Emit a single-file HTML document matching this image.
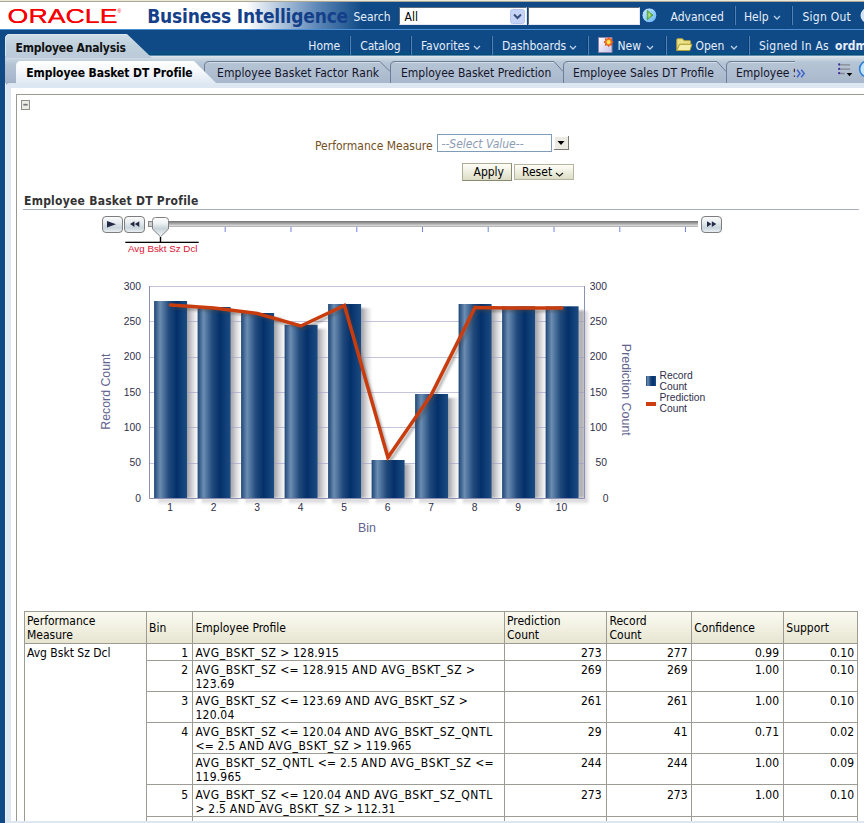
<!DOCTYPE html>
<html><head><meta charset="utf-8"><title>Oracle BI Interactive Dashboards - Employee Analysis</title>
<style>
html,body{margin:0;padding:0;background:#fff;}
body{width:864px;height:823px;overflow:hidden;position:relative;font-family:"DejaVu Sans Condensed","Liberation Sans",sans-serif;font-size:12px;}
.a{position:absolute;}
.t{position:absolute;white-space:nowrap;}
.sep{position:absolute;width:2px;background:linear-gradient(to right,#0c3d72 0,#0c3d72 1px,#4f82b8 1px,#4f82b8 2px);margin-left:-1px;}
.sepd{position:absolute;width:1px;background:#0b3a6c;}
.U{letter-spacing:.62px;}
</style></head><body>

<div class="a" style="left:0;top:0;width:864px;height:1px;background:#ece9d8"></div>
<div class="a" style="left:0;top:1px;width:864px;height:1px;background:#aca899"></div>
<div class="a" style="left:0;top:2px;width:864px;height:27px;background:linear-gradient(to right,#fff 0,#fff 246px,#5c86b6 318px,#104a86 362px,#104a86 864px)"></div>
<div class="a" style="left:0;top:29px;width:864px;height:1px;background:#4d8fd6"></div>
<div class="a" style="left:0;top:30px;width:864px;height:25px;background:#104a86"></div>
<div class="a" style="left:5px;top:51px;width:859px;height:4px;background:linear-gradient(to bottom,#104a86,#0a4f86 1.5px,#07507f 2.5px,#044878 4px)"></div>
<div class="a" style="left:0;top:30px;width:5px;height:793px;background:#104a86"></div>
<svg class="a" style="left:0;top:2px" width="140" height="27" viewBox="0 0 140 27"><g font-family='"Liberation Sans",sans-serif' font-size="19.4" fill="#f80000"><text x="7.6" y="20.6" textLength="110" lengthAdjust="spacingAndGlyphs">ORACLE</text><text x="7.6" y="21.4" textLength="110" lengthAdjust="spacingAndGlyphs">ORACLE</text></g><text x="117.5" y="10.5" font-family='"Liberation Sans",sans-serif' font-size="5" fill="#f80000">®</text></svg>
<div class="t" style="left:147.3px;top:5.73px;font-size:19px;line-height:21px;color:#14408a;font-weight:bold;letter-spacing:-0.2px;">Business Intelligence</div>
<div class="t" style="left:353.5px;top:9.65px;font-size:12px;line-height:14px;color:#e6eefa;">Search</div>
<div class="a" style="left:399px;top:7px;width:126px;height:16px;background:#fff;border:1px solid;border-color:#5a6a80 #e4e8ee #e4e8ee #5a6a80"></div>
<div class="t" style="left:404.5px;top:9.65px;font-size:12px;line-height:14px;color:#000;">All</div>
<svg class="a" style="left:510px;top:8.500px" width="15" height="15" viewBox="0 0 15 15"><rect x="0.5" y="0.5" width="14" height="14" rx="2" fill="#c6d5f7" stroke="#b4c6ee"/><path d="M4 5.5 L7.5 9 L11 5.5" fill="none" stroke="#3a4f7a" stroke-width="2"/></svg>
<div class="a" style="left:528px;top:7px;width:110px;height:16px;background:#fff;border:1px solid;border-color:#5a6a80 #e4e8ee #e4e8ee #5a6a80"></div>
<svg class="a" style="left:641px;top:7px" width="17" height="17" viewBox="0 0 17 17"><defs><linearGradient id="go" x1="0" y1="0" x2="1" y2="1"><stop offset="0" stop-color="#d2ecff"/><stop offset="0.5" stop-color="#93d0fb"/><stop offset="1" stop-color="#62b4f2"/></linearGradient><radialGradient id="gt" cx="0.35" cy="0.5" r="0.6"><stop offset="0" stop-color="#b8e68a"/><stop offset="1" stop-color="#4a9c22"/></radialGradient></defs><circle cx="8.400" cy="8.300" r="7.400" fill="url(#go)" stroke="#0b3c88" stroke-width="0.900"/><path d="M6.300 3.400 L12 8.100 L6.300 12.800 Z" fill="url(#gt)" stroke="#3f8f1e" stroke-width="0.600"/></svg>
<div class="t" style="left:670.5px;top:9.65px;font-size:12px;line-height:14px;color:#e6eefa;">Advanced</div>
<div class="sep" style="left:735px;top:6px;height:19px"></div>
<div class="t" style="left:744px;top:9.65px;font-size:12px;line-height:14px;color:#e6eefa;">Help</div>
<svg class="a" style="left:772.5px;top:15px" width="8" height="6" viewBox="0 0 8 6"><path d="M1 1 L4.0 4 L7 1" fill="none" stroke="#b9cfe9" stroke-width="1.3"/></svg>
<div class="sep" style="left:792px;top:6px;height:19px"></div>
<div class="t" style="left:802.5px;top:9.65px;font-size:12px;line-height:14px;color:#e6eefa;letter-spacing:0.25px;">Sign Out</div>
<svg class="a" style="left:860px;top:7px" width="4" height="17" viewBox="0 0 4 17"><circle cx="8.5" cy="8.5" r="7.5" fill="#cfe3fa" stroke="#e8f1fc"/></svg>
<div class="t" style="left:308.3px;top:38.85px;font-size:12px;line-height:14px;color:#e6eefa;">Home</div>
<div class="sep" style="left:350px;top:36px;height:19px"></div>
<div class="t" style="left:360.3px;top:38.85px;font-size:12px;line-height:14px;color:#e6eefa;letter-spacing:-0.2px;">Catalog</div>
<div class="sep" style="left:411px;top:36px;height:19px"></div>
<div class="t" style="left:421px;top:38.85px;font-size:12px;line-height:14px;color:#e6eefa;">Favorites</div>
<svg class="a" style="left:472.5px;top:45px" width="8" height="6" viewBox="0 0 8 6"><path d="M1 1 L4.0 4 L7 1" fill="none" stroke="#b9cfe9" stroke-width="1.3"/></svg>
<div class="sep" style="left:492px;top:36px;height:19px"></div>
<div class="t" style="left:502px;top:38.85px;font-size:12px;line-height:14px;color:#e6eefa;">Dashboards</div>
<svg class="a" style="left:568.5px;top:45px" width="8" height="6" viewBox="0 0 8 6"><path d="M1 1 L4.0 4 L7 1" fill="none" stroke="#b9cfe9" stroke-width="1.3"/></svg>
<div class="sep" style="left:588px;top:36px;height:19px"></div>
<svg class="a" style="left:597px;top:36px" width="18" height="18" viewBox="0 0 18 18"><defs><linearGradient id="pg" x1="0" y1="0" x2="1" y2="1"><stop offset="0" stop-color="#ffffff"/><stop offset="1" stop-color="#c9c2ea"/></linearGradient></defs><path d="M1.500 1.500 H15 V16.500 H1.500 Z" fill="url(#pg)" stroke="#8b85ad" stroke-width="1"/><path d="M11.60 1.30 L12.79 3.14 L14.92 2.68 L14.46 4.81 L16.30 6.00 L14.46 7.19 L14.92 9.32 L12.79 8.86 L11.60 10.70 L10.41 8.86 L8.28 9.32 L8.74 7.19 L6.90 6.00 L8.74 4.81 L8.28 2.68 L10.41 3.14 Z" fill="#f07a1c" stroke="#dc4a1a" stroke-width="0.800"/><circle cx="11.6" cy="6" r="2" fill="#ffe75a"/></svg>
<div class="t" style="left:617.5px;top:38.85px;font-size:12px;line-height:14px;color:#e6eefa;">New</div>
<svg class="a" style="left:645.5px;top:45px" width="8" height="6" viewBox="0 0 8 6"><path d="M1 1 L4.0 4 L7 1" fill="none" stroke="#b9cfe9" stroke-width="1.3"/></svg>
<div class="sep" style="left:666px;top:36px;height:19px"></div>
<svg class="a" style="left:675px;top:37px" width="18" height="16" viewBox="0 0 18 16"><path d="M1.800 13.500 V2.500 Q1.800 1.700 2.600 1.700 H7.400 L9.200 3.700 H14.900 Q15.600 3.700 15.600 4.400 V7.300 H4.600 Z" fill="#ebe28a" stroke="#b5a133" stroke-width="1"/><path d="M1.800 13.500 L4.600 7.300 H17 L14.800 13.500 Z" fill="#f3eeaa" stroke="#b5a133" stroke-width="1" stroke-linejoin="round"/></svg>
<div class="t" style="left:695.5px;top:38.85px;font-size:12px;line-height:14px;color:#e6eefa;">Open</div>
<svg class="a" style="left:729.5px;top:45px" width="8" height="6" viewBox="0 0 8 6"><path d="M1 1 L4.0 4 L7 1" fill="none" stroke="#b9cfe9" stroke-width="1.3"/></svg>
<div class="sep" style="left:749px;top:36px;height:19px"></div>
<div class="t" style="left:759px;top:38.85px;font-size:12px;line-height:14px;color:#e6eefa;letter-spacing:0.25px;">Signed In As</div>
<div class="t" style="left:835px;top:38.85px;font-size:12px;line-height:14px;color:#e6eefa;font-weight:bold;">ordm</div>
<div class="a" style="left:5px;top:55px;width:859px;height:34px;background:linear-gradient(to bottom,#5d8bab 0,#5d8bab 1px,#e0e7ef 1px,#d6dfe8 2px,#c5d3de 4.5px,#bccbd9 6.5px,#b3c3d3 10px,#adbccf 18px,#a6b5c9 26px,#a0aec3 28px,#a0aec3 34px)"></div>
<div class="a" style="left:5px;top:83px;width:859px;height:740px;background:#dde7f2;border-top-left-radius:5px"></div>
<div class="a" style="left:5px;top:83px;width:1px;height:740px;background:#e9f0f8"></div>
<div class="a" style="left:11px;top:88px;width:853px;height:733px;background:#fff"></div>
<svg class="a" style="left:0;top:30px" width="864" height="60" viewBox="0 30 864 60">
<defs>
<linearGradient id="g1" x1="0" y1="0" x2="0" y2="1"><stop offset="0" stop-color="#cfdde6"/><stop offset="0.5" stop-color="#bfd0dc"/><stop offset="1" stop-color="#bccad9"/></linearGradient>
<linearGradient id="g2" x1="0" y1="0" x2="0" y2="1"><stop offset="0" stop-color="#ffffff"/><stop offset="0.45" stop-color="#f4f7fb"/><stop offset="1" stop-color="#dfe8f3"/></linearGradient>
<linearGradient id="g3" x1="0" y1="0" x2="0" y2="1"><stop offset="0" stop-color="#b7c6d6"/><stop offset="1" stop-color="#a8b7cb"/></linearGradient>
</defs>
<path d="M5 58 V39 Q5 34 10 34 H127 L150 56 L152 58 Z" fill="url(#g1)"/>
<path d="M5.5 56 V39 Q5.5 34.5 10 34.5 H126" fill="none" stroke="#dbe7ee" stroke-width="1"/>
<!-- inactive tabs -->
<path d="M204 83 V66 Q204 61.5 209 61.5 H864 V83 Z" fill="url(#g3)"/>
<path d="M204.5 72 V66 Q204.5 61.5 209 61.5 H380 L390 71.5" fill="none" stroke="#6f7c95" stroke-width="1"/>
<path d="M390.5 83 V66 Q390.5 61.5 395 61.5 H554 L563 71.5" fill="none" stroke="#6f7c95" stroke-width="1"/>
<path d="M563.5 83 V66 Q563.5 61.5 568 61.5 H717 L726 71.5" fill="none" stroke="#6f7c95" stroke-width="1"/>
<path d="M726.5 83 V66 Q726.5 61.5 731 61.5 H795" fill="none" stroke="#6f7c95" stroke-width="1"/>
<path d="M209 62.5 H379.5 M395 62.5 H553.5 M568 62.5 H716.5 M731 62.5 H795" fill="none" stroke="#d3dde8" stroke-width="1"/>
<!-- active tab -->
<path d="M16 84 V66 Q16 61 21 61 H194 L216 83 V84 Z" fill="url(#g2)"/>
</svg>
<div class="t" style="left:15.5px;top:40.55px;font-size:12px;line-height:14px;color:#111;font-weight:bold;letter-spacing:-0.2px;">Employee Analysis</div>
<div class="t" style="left:26.3px;top:65.95px;font-size:12px;line-height:14px;color:#000;font-weight:bold;letter-spacing:-0.07px;">Employee Basket DT Profile</div>
<div class="t" style="left:217px;top:65.65px;font-size:12px;line-height:14px;color:#14142a;letter-spacing:0.08px;">Employee Basket Factor Rank</div>
<div class="t" style="left:401px;top:65.65px;font-size:12px;line-height:14px;color:#14142a;">Employee Basket Prediction</div>
<div class="t" style="left:573px;top:65.65px;font-size:12px;line-height:14px;color:#14142a;">Employee Sales DT Profile</div>
<div class="a" style="left:736px;top:62px;width:59px;height:20px;overflow:hidden"><div class="t" style="left:0px;top:3.65px;font-size:12px;line-height:14px;color:#14142a;">Employee Sa</div></div>
<svg class="a" style="left:796px;top:68.500px" width="10" height="9" viewBox="0 0 10 9"><path d="M1 0.800 L4 4.500 L1 8.200 M5.200 0.800 L8.200 4.500 L5.200 8.200" fill="none" stroke="#3f62c8" stroke-width="1.5"/></svg>
<svg class="a" style="left:837px;top:62px" width="17" height="16" viewBox="0 0 17 16"><path d="M3.300 2.800 H13.100 M3.300 7.200 H13.100 M3.300 11.500 H7.600" stroke="#85858c" stroke-width="1.300"/><circle cx="2.200" cy="2.500" r="1.150" fill="#3d2d9c"/><circle cx="2.200" cy="6.900" r="1.150" fill="#3d2d9c"/><circle cx="2.200" cy="11.200" r="1.150" fill="#3d2d9c"/><path d="M9.700 11 H15.300 L12.500 14.200 Z" fill="#000"/></svg>
<svg class="a" style="left:858px;top:60px" width="6" height="18" viewBox="0 0 6 18"><circle cx="9.500" cy="9" r="7.900" fill="#c2e5fc" stroke="#2f7fd8" stroke-width="1.600"/></svg>
<div class="a" style="left:16px;top:94px;width:860px;height:740px;border:1px solid #9a9a90;border-right:0;border-bottom:0"></div>
<svg class="a" style="left:21px;top:100px" width="9" height="10" viewBox="0 0 9 10"><rect x="0.500" y="0.500" width="8" height="9" fill="#ecece6" stroke="#8f8f88"/><path d="M2.300 4.700 H6.700" stroke="#777" stroke-width="1.700"/></svg>
<div class="t" style="left:315px;top:138.85px;font-size:12px;line-height:14px;color:#74501c;">Performance Measure</div>
<div class="a" style="left:437px;top:134px;width:113px;height:16px;background:#fff;border:1px solid #7f9db9"></div>
<div class="t" style="left:441.5px;top:137.15px;font-size:12px;line-height:14px;color:#8d9cb3;font-style:italic;">--Select Value--</div>
<svg class="a" style="left:554px;top:136px" width="15" height="14" viewBox="0 0 15 14"><rect x="0" y="0" width="15" height="14" fill="#7a7a72"/><rect x="0" y="0" width="14" height="13" fill="#fff"/><rect x="1" y="1" width="13" height="12" fill="#ecebe3"/><path d="M3.5 5 H10.5 L7 9 Z" fill="#000"/></svg>
<div class="a" style="left:462px;top:163px;width:48px;height:16px;border:1px solid #adad94;border-right-color:#8a8a70;border-bottom-color:#8a8a70;background:linear-gradient(to bottom,#fefef8,#ebebda 60%,#dcdcc6)"></div>
<div class="t" style="left:473.5px;top:165.35px;font-size:12px;line-height:14px;color:#000;">Apply</div>
<div class="a" style="left:514px;top:164px;width:58px;height:14px;border:1px solid #b5b5a0;background:linear-gradient(to bottom,#fefef8,#ebebda 60%,#dcdcc6)"></div>
<div class="t" style="left:522px;top:165.35px;font-size:12px;line-height:14px;color:#000;">Reset</div>
<svg class="a" style="left:555px;top:172px" width="9" height="6" viewBox="0 0 9 6"><path d="M1 1 L4.5 4 L8 1" fill="none" stroke="#222" stroke-width="1.3"/></svg>
<div class="t" style="left:24px;top:194.15px;font-size:12px;line-height:14px;color:#333;font-weight:bold;letter-spacing:0.25px;">Employee Basket DT Profile</div>
<div class="a" style="left:23px;top:209px;width:836px;height:1px;background:#a9adbd"></div>
<svg class="a" style="left:95px;top:212px" width="640" height="48" viewBox="95 212 640 48"><defs>
<linearGradient id="bt" x1="0" y1="0" x2="0" y2="1"><stop offset="0" stop-color="#fbfcfc"/><stop offset="0.4" stop-color="#e6ebee"/><stop offset="0.7" stop-color="#c9d5dc"/><stop offset="1" stop-color="#eef2f5"/></linearGradient>
<linearGradient id="tr" x1="0" y1="0" x2="0" y2="1"><stop offset="0" stop-color="#737373"/><stop offset="0.25" stop-color="#8f8f8f"/><stop offset="0.75" stop-color="#d4d4d4"/><stop offset="0.9" stop-color="#c2c2c2"/><stop offset="1" stop-color="#858585"/></linearGradient>
<linearGradient id="th" x1="0" y1="0" x2="0" y2="1"><stop offset="0" stop-color="#ffffff"/><stop offset="0.3" stop-color="#eef2f4"/><stop offset="0.58" stop-color="#c6d2d9"/><stop offset="1" stop-color="#f4f7f8"/></linearGradient>
</defs><rect x="150" y="221" width="548" height="6" fill="url(#tr)"/><rect x="148.500" y="221.500" width="4" height="5" fill="#cfcfcf" stroke="#858585"/><path d="M225.2 227 V232" stroke="#6f84d6" stroke-width="1"/><path d="M291.0 227 V232" stroke="#6f84d6" stroke-width="1"/><path d="M356.8 227 V232" stroke="#6f84d6" stroke-width="1"/><path d="M422.5 227 V232" stroke="#6f84d6" stroke-width="1"/><path d="M488.2 227 V232" stroke="#6f84d6" stroke-width="1"/><path d="M554.0 227 V232" stroke="#6f84d6" stroke-width="1"/><path d="M619.8 227 V232" stroke="#6f84d6" stroke-width="1"/><path d="M685.5 227 V232" stroke="#6f84d6" stroke-width="1"/><rect x="102.500" y="216.500" width="20" height="16" rx="3.500" fill="url(#bt)" stroke="#7d7d7d"/><path d="M107 221 L116 224.200 L107 227.400 Z" fill="#232a45"/><rect x="124.500" y="216.500" width="20" height="16" rx="3.500" fill="url(#bt)" stroke="#7d7d7d"/><path d="M134.500 221.300 L130 224.100 L134.500 226.900 Z M139.300 221.300 L134.800 224.100 L139.300 226.900 Z" fill="#232a45"/><rect x="701.500" y="216.500" width="20" height="16" rx="3.500" fill="url(#bt)" stroke="#7d7d7d"/><path d="M707 221.300 L711.500 224.100 L707 226.900 Z M711.800 221.300 L716.300 224.100 L711.800 226.900 Z" fill="#232a45"/><path d="M152.500 220.500 Q152.500 217.500 155.500 217.500 H165.500 Q168.500 217.500 168.500 220.500 V229 L160.500 236.800 L152.500 229 Z" fill="url(#th)" stroke="#808080"/><rect x="159.800" y="237" width="1.400" height="5" fill="#000"/><rect x="125.300" y="241.700" width="73.400" height="1.300" fill="#000"/><text x="128" y="252" font-family='"Liberation Sans",sans-serif' font-size="9.8" fill="#dc1434">Avg Bskt Sz Dcl</text></svg>
<svg class="a" style="left:90px;top:270px" width="660" height="275" viewBox="90 270 660 275"><defs>
<linearGradient id="bar" x1="0" y1="0" x2="1" y2="0"><stop offset="0" stop-color="#1f4676"/><stop offset="0.18" stop-color="#6b8db2"/><stop offset="0.45" stop-color="#214a7c"/><stop offset="0.68" stop-color="#04306a"/><stop offset="1" stop-color="#1c4c82"/></linearGradient>
<linearGradient id="sh" x1="0" y1="0" x2="1" y2="0"><stop offset="0" stop-color="#97979c"/><stop offset="0.15" stop-color="#a6a6ab"/><stop offset="0.55" stop-color="#d9d9dc"/><stop offset="1" stop-color="#ffffff"/></linearGradient>
<linearGradient id="sh2" x1="0" y1="0" x2="1" y2="0"><stop offset="0" stop-color="#d2d2d6"/><stop offset="1" stop-color="#ffffff"/></linearGradient>
<linearGradient id="shb" x1="0" y1="0" x2="0" y2="1"><stop offset="0" stop-color="#c4c4c8"/><stop offset="1" stop-color="#ffffff"/></linearGradient>
<filter id="blur" x="-10%" y="-10%" width="120%" height="130%"><feGaussianBlur stdDeviation="1.3"/></filter>
<filter id="blur1" x="-5%" y="-5%" width="110%" height="110%"><feGaussianBlur stdDeviation="0.9"/></filter>
</defs><g filter="url(#blur1)"><rect x="186.1" y="305.0" width="12" height="193.0" fill="url(#sh)"/><rect x="229.6" y="311.0" width="12" height="187.0" fill="url(#sh)"/><rect x="273.1" y="317.0" width="12" height="181.0" fill="url(#sh)"/><rect x="316.6" y="328.8" width="12" height="169.2" fill="url(#sh)"/><rect x="360.1" y="308.0" width="12" height="190.0" fill="url(#sh)"/><rect x="403.6" y="464.0" width="12" height="34.0" fill="url(#sh)"/><rect x="447.1" y="398.0" width="12" height="100.0" fill="url(#sh)"/><rect x="490.6" y="308.0" width="12" height="190.0" fill="url(#sh)"/><rect x="534.1" y="310.3" width="12" height="187.7" fill="url(#sh)"/><rect x="577.6" y="310.3" width="6.9" height="187.7" fill="#b4b4b9"/><rect x="585.0" y="311.3" width="5" height="191.7" fill="url(#sh2)"/><rect x="158.1" y="499.0" width="37.0" height="6" fill="url(#shb)" opacity="0.85"/><rect x="201.6" y="499.0" width="37.0" height="6" fill="url(#shb)" opacity="0.85"/><rect x="245.1" y="499.0" width="37.0" height="6" fill="url(#shb)" opacity="0.85"/><rect x="288.6" y="499.0" width="37.0" height="6" fill="url(#shb)" opacity="0.85"/><rect x="332.1" y="499.0" width="37.0" height="6" fill="url(#shb)" opacity="0.85"/><rect x="375.6" y="499.0" width="37.0" height="6" fill="url(#shb)" opacity="0.85"/><rect x="419.1" y="499.0" width="37.0" height="6" fill="url(#shb)" opacity="0.85"/><rect x="462.6" y="499.0" width="37.0" height="6" fill="url(#shb)" opacity="0.85"/><rect x="506.1" y="499.0" width="37.0" height="6" fill="url(#shb)" opacity="0.85"/><rect x="549.6" y="499.0" width="37.0" height="6" fill="url(#shb)" opacity="0.85"/></g><path d="M149.5 498.5 H584.5" stroke="#9d9dc4" stroke-opacity="0.6" stroke-width="1"/><path d="M149.5 463.5 H584.5" stroke="#9d9dc4" stroke-opacity="0.6" stroke-width="1"/><path d="M149.5 427.5 H584.5" stroke="#9d9dc4" stroke-opacity="0.6" stroke-width="1"/><path d="M149.5 392.5 H584.5" stroke="#9d9dc4" stroke-opacity="0.6" stroke-width="1"/><path d="M149.5 357.5 H584.5" stroke="#9d9dc4" stroke-opacity="0.6" stroke-width="1"/><path d="M149.5 321.5 H584.5" stroke="#9d9dc4" stroke-opacity="0.6" stroke-width="1"/><path d="M149.5 286.5 H584.5" stroke="#9d9dc4" stroke-opacity="0.6" stroke-width="1"/><rect x="154.1" y="301.0" width="33" height="197.0" fill="url(#bar)"/><rect x="197.6" y="307.0" width="33" height="191.0" fill="url(#bar)"/><rect x="241.1" y="313.0" width="33" height="185.0" fill="url(#bar)"/><rect x="284.6" y="324.8" width="33" height="173.2" fill="url(#bar)"/><rect x="328.1" y="304.0" width="33" height="194.0" fill="url(#bar)"/><rect x="371.6" y="460.0" width="33" height="38.0" fill="url(#bar)"/><rect x="415.1" y="394.0" width="33" height="104.0" fill="url(#bar)"/><rect x="458.6" y="304.0" width="33" height="194.0" fill="url(#bar)"/><rect x="502.1" y="306.3" width="33" height="191.7" fill="url(#bar)"/><rect x="545.6" y="306.3" width="33" height="191.7" fill="url(#bar)"/><path d="M149.5 286 V498.5 H584.5 V286" fill="none" stroke="#8f8fb3" stroke-width="1"/><polyline points="172.9,307.8 216.4,310.8 259.9,316.3 303.4,328.8 346.9,308.2 390.4,460.3 433.9,397.3 477.4,310.4 520.9,310.8 564.4,310.8" fill="none" stroke="#444" stroke-opacity="0.4" stroke-width="3" stroke-linejoin="round" stroke-linecap="round" filter="url(#blur)"/><polyline points="170.4,305.0 213.9,308.0 257.4,313.5 300.9,326.0 344.4,305.4 387.9,457.5 431.4,394.5 474.9,307.6 518.4,308.0 561.9,308.0" fill="none" stroke="#c93c0e" stroke-width="3.5" stroke-linejoin="miter" stroke-linecap="round"/><text x="141" y="501.6" text-anchor="end" font-family='"Liberation Sans",sans-serif' font-size="10.3" fill="#2f2f4a">0</text><text x="608.5" y="501.6" text-anchor="end" font-family='"Liberation Sans",sans-serif' font-size="10.3" fill="#2f2f4a">0</text><text x="141" y="466.3" text-anchor="end" font-family='"Liberation Sans",sans-serif' font-size="10.3" fill="#2f2f4a">50</text><text x="607" y="466.3" text-anchor="end" font-family='"Liberation Sans",sans-serif' font-size="10.3" fill="#2f2f4a">50</text><text x="141" y="430.9" text-anchor="end" font-family='"Liberation Sans",sans-serif' font-size="10.3" fill="#2f2f4a">100</text><text x="607" y="430.9" text-anchor="end" font-family='"Liberation Sans",sans-serif' font-size="10.3" fill="#2f2f4a">100</text><text x="141" y="395.6" text-anchor="end" font-family='"Liberation Sans",sans-serif' font-size="10.3" fill="#2f2f4a">150</text><text x="607" y="395.6" text-anchor="end" font-family='"Liberation Sans",sans-serif' font-size="10.3" fill="#2f2f4a">150</text><text x="141" y="360.3" text-anchor="end" font-family='"Liberation Sans",sans-serif' font-size="10.3" fill="#2f2f4a">200</text><text x="607" y="360.3" text-anchor="end" font-family='"Liberation Sans",sans-serif' font-size="10.3" fill="#2f2f4a">200</text><text x="141" y="324.9" text-anchor="end" font-family='"Liberation Sans",sans-serif' font-size="10.3" fill="#2f2f4a">250</text><text x="607" y="324.9" text-anchor="end" font-family='"Liberation Sans",sans-serif' font-size="10.3" fill="#2f2f4a">250</text><text x="141" y="289.6" text-anchor="end" font-family='"Liberation Sans",sans-serif' font-size="10.3" fill="#2f2f4a">300</text><text x="607" y="289.6" text-anchor="end" font-family='"Liberation Sans",sans-serif' font-size="10.3" fill="#2f2f4a">300</text><text x="170.1" y="511" text-anchor="middle" font-family='"Liberation Sans",sans-serif' font-size="10.3" fill="#2f2f4a">1</text><text x="213.6" y="511" text-anchor="middle" font-family='"Liberation Sans",sans-serif' font-size="10.3" fill="#2f2f4a">2</text><text x="257.1" y="511" text-anchor="middle" font-family='"Liberation Sans",sans-serif' font-size="10.3" fill="#2f2f4a">3</text><text x="300.6" y="511" text-anchor="middle" font-family='"Liberation Sans",sans-serif' font-size="10.3" fill="#2f2f4a">4</text><text x="344.1" y="511" text-anchor="middle" font-family='"Liberation Sans",sans-serif' font-size="10.3" fill="#2f2f4a">5</text><text x="387.6" y="511" text-anchor="middle" font-family='"Liberation Sans",sans-serif' font-size="10.3" fill="#2f2f4a">6</text><text x="431.1" y="511" text-anchor="middle" font-family='"Liberation Sans",sans-serif' font-size="10.3" fill="#2f2f4a">7</text><text x="474.6" y="511" text-anchor="middle" font-family='"Liberation Sans",sans-serif' font-size="10.3" fill="#2f2f4a">8</text><text x="518.0" y="511" text-anchor="middle" font-family='"Liberation Sans",sans-serif' font-size="10.3" fill="#2f2f4a">9</text><text x="561.5" y="511" text-anchor="middle" font-family='"Liberation Sans",sans-serif' font-size="10.3" fill="#2f2f4a">10</text><text x="367" y="532" text-anchor="middle" font-family='"Liberation Sans",sans-serif' font-size="12.4" fill="#63638f">Bin</text><text transform="translate(110 391.7) rotate(-90)" text-anchor="middle" font-family='"Liberation Sans",sans-serif' font-size="12.35" fill="#63638f">Record Count</text><text transform="translate(621.5 389.8) rotate(90)" text-anchor="middle" font-family='"Liberation Sans",sans-serif' font-size="12.45" fill="#63638f">Prediction Count</text><rect x="646" y="376" width="10" height="10" fill="url(#bar)"/><rect x="646" y="402" width="10" height="4" fill="#cc3e10"/><text x="659.5" y="378.5" font-family='"Liberation Sans",sans-serif' font-size="10.3" fill="#2f2f4a">Record</text><text x="659.5" y="389.5" font-family='"Liberation Sans",sans-serif' font-size="10.3" fill="#2f2f4a">Count</text><text x="659.5" y="400.5" font-family='"Liberation Sans",sans-serif' font-size="10.3" fill="#2f2f4a">Prediction</text><text x="659.5" y="411.5" font-family='"Liberation Sans",sans-serif' font-size="10.3" fill="#2f2f4a">Count</text></svg>
<div class="a" style="left:24px;top:611px;width:834px;height:33px;background:linear-gradient(to bottom,#fbfbf1,#f1f0e2 50%,#e6e4d0)"></div>
<div class="a" style="left:24px;top:611px;width:1px;height:215px;background:#9c9c94"></div>
<div class="a" style="left:146px;top:611px;width:1px;height:215px;background:#9c9c94"></div>
<div class="a" style="left:192px;top:611px;width:1px;height:215px;background:#9c9c94"></div>
<div class="a" style="left:504px;top:611px;width:1px;height:215px;background:#9c9c94"></div>
<div class="a" style="left:606px;top:611px;width:1px;height:215px;background:#9c9c94"></div>
<div class="a" style="left:691px;top:611px;width:1px;height:215px;background:#9c9c94"></div>
<div class="a" style="left:783px;top:611px;width:1px;height:215px;background:#9c9c94"></div>
<div class="a" style="left:857px;top:611px;width:1px;height:215px;background:#9c9c94"></div>
<div class="a" style="left:24px;top:611px;width:834px;height:1px;background:#9c9c94"></div>
<div class="a" style="left:24px;top:643px;width:834px;height:1px;background:#9c9c94"></div>
<div class="a" style="left:146px;top:660px;width:712px;height:1px;background:#9c9c94"></div>
<div class="a" style="left:146px;top:691px;width:712px;height:1px;background:#9c9c94"></div>
<div class="a" style="left:146px;top:722px;width:712px;height:1px;background:#9c9c94"></div>
<div class="a" style="left:192px;top:753px;width:666px;height:1px;background:#9c9c94"></div>
<div class="a" style="left:146px;top:784px;width:712px;height:1px;background:#9c9c94"></div>
<div class="a" style="left:146px;top:816px;width:712px;height:1px;background:#9c9c94"></div>
<div class="t" style="left:27px;top:613.85px;font-size:12px;line-height:14px;color:#000;">Performance</div><div class="t" style="left:27px;top:627.55px;font-size:12px;line-height:14px;color:#000;">Measure</div>
<div class="t" style="left:149px;top:620.85px;font-size:12px;line-height:14px;color:#000;">Bin</div>
<div class="t" style="left:195.5px;top:620.85px;font-size:12px;line-height:14px;color:#000;">Employee Profile</div>
<div class="t" style="left:507px;top:613.85px;font-size:12px;line-height:14px;color:#000;">Prediction</div><div class="t" style="left:507px;top:627.55px;font-size:12px;line-height:14px;color:#000;">Count</div>
<div class="t" style="left:609.5px;top:613.85px;font-size:12px;line-height:14px;color:#000;">Record</div><div class="t" style="left:609.5px;top:627.55px;font-size:12px;line-height:14px;color:#000;">Count</div>
<div class="t" style="left:694.3px;top:620.85px;font-size:12px;line-height:14px;color:#000;">Confidence</div>
<div class="t" style="left:786.3px;top:620.85px;font-size:12px;line-height:14px;color:#000;">Support</div>
<div class="t" style="left:27px;top:645.85px;font-size:12px;line-height:14px;color:#000;">Avg Bskt Sz Dcl</div>
<div class="t" style="right:676px;top:645.85px;font-size:12px;line-height:14px;color:#000">1</div>
<div class="t" style="left:195.5px;top:645.85px;font-size:12px;line-height:14px;color:#000;letter-spacing:0.2px;"><span class="U">AVG_BSKT_SZ</span> &gt; 128.915</div>
<div class="t" style="right:262.5px;top:645.85px;font-size:12px;line-height:14px;color:#000">273</div>
<div class="t" style="right:176.5px;top:645.85px;font-size:12px;line-height:14px;color:#000">277</div>
<div class="t" style="right:85px;top:645.85px;font-size:12px;line-height:14px;color:#000">0.99</div>
<div class="t" style="right:10px;top:645.85px;font-size:12px;line-height:14px;color:#000">0.10</div>
<div class="t" style="right:676px;top:662.85px;font-size:12px;line-height:14px;color:#000">2</div>
<div class="t" style="left:195.5px;top:662.85px;font-size:12px;line-height:14px;color:#000;letter-spacing:0.2px;"><span class="U">AVG_BSKT_SZ</span> &lt;= 128.915 <span class="U">AND</span> <span class="U">AVG_BSKT_SZ</span> &gt;</div>
<div class="t" style="left:195.5px;top:676.85px;font-size:12px;line-height:14px;color:#000;letter-spacing:0.2px;">123.69</div>
<div class="t" style="right:262.5px;top:662.85px;font-size:12px;line-height:14px;color:#000">269</div>
<div class="t" style="right:176.5px;top:662.85px;font-size:12px;line-height:14px;color:#000">269</div>
<div class="t" style="right:85px;top:662.85px;font-size:12px;line-height:14px;color:#000">1.00</div>
<div class="t" style="right:10px;top:662.85px;font-size:12px;line-height:14px;color:#000">0.10</div>
<div class="t" style="right:676px;top:693.85px;font-size:12px;line-height:14px;color:#000">3</div>
<div class="t" style="left:195.5px;top:693.85px;font-size:12px;line-height:14px;color:#000;letter-spacing:0.2px;"><span class="U">AVG_BSKT_SZ</span> &lt;= 123.69 <span class="U">AND</span> <span class="U">AVG_BSKT_SZ</span> &gt;</div>
<div class="t" style="left:195.5px;top:707.85px;font-size:12px;line-height:14px;color:#000;letter-spacing:0.2px;">120.04</div>
<div class="t" style="right:262.5px;top:693.85px;font-size:12px;line-height:14px;color:#000">261</div>
<div class="t" style="right:176.5px;top:693.85px;font-size:12px;line-height:14px;color:#000">261</div>
<div class="t" style="right:85px;top:693.85px;font-size:12px;line-height:14px;color:#000">1.00</div>
<div class="t" style="right:10px;top:693.85px;font-size:12px;line-height:14px;color:#000">0.10</div>
<div class="t" style="right:676px;top:724.85px;font-size:12px;line-height:14px;color:#000">4</div>
<div class="t" style="left:195.5px;top:724.85px;font-size:12px;line-height:14px;color:#000;letter-spacing:0.2px;"><span class="U">AVG_BSKT_SZ</span> &lt;= 120.04 <span class="U">AND</span> <span class="U">AVG_BSKT_SZ_QNTL</span></div>
<div class="t" style="left:195.5px;top:738.85px;font-size:12px;line-height:14px;color:#000;letter-spacing:0.2px;">&lt;= 2.5 <span class="U">AND</span> <span class="U">AVG_BSKT_SZ</span> &gt; 119.965</div>
<div class="t" style="right:262.5px;top:724.85px;font-size:12px;line-height:14px;color:#000">29</div>
<div class="t" style="right:176.5px;top:724.85px;font-size:12px;line-height:14px;color:#000">41</div>
<div class="t" style="right:85px;top:724.85px;font-size:12px;line-height:14px;color:#000">0.71</div>
<div class="t" style="right:10px;top:724.85px;font-size:12px;line-height:14px;color:#000">0.02</div>
<div class="t" style="left:195.5px;top:755.85px;font-size:12px;line-height:14px;color:#000;letter-spacing:0.2px;"><span class="U">AVG_BSKT_SZ_QNTL</span> &lt;= 2.5 <span class="U">AND</span> <span class="U">AVG_BSKT_SZ</span> &lt;=</div>
<div class="t" style="left:195.5px;top:769.85px;font-size:12px;line-height:14px;color:#000;letter-spacing:0.2px;">119.965</div>
<div class="t" style="right:262.5px;top:755.85px;font-size:12px;line-height:14px;color:#000">244</div>
<div class="t" style="right:176.5px;top:755.85px;font-size:12px;line-height:14px;color:#000">244</div>
<div class="t" style="right:85px;top:755.85px;font-size:12px;line-height:14px;color:#000">1.00</div>
<div class="t" style="right:10px;top:755.85px;font-size:12px;line-height:14px;color:#000">0.09</div>
<div class="t" style="right:676px;top:787.85px;font-size:12px;line-height:14px;color:#000">5</div>
<div class="t" style="left:195.5px;top:787.85px;font-size:12px;line-height:14px;color:#000;letter-spacing:0.2px;"><span class="U">AVG_BSKT_SZ</span> &lt;= 120.04 <span class="U">AND</span> <span class="U">AVG_BSKT_SZ_QNTL</span></div>
<div class="t" style="left:195.5px;top:801.85px;font-size:12px;line-height:14px;color:#000;letter-spacing:0.2px;">&gt; 2.5 <span class="U">AND</span> <span class="U">AVG_BSKT_SZ</span> &gt; 112.31</div>
<div class="t" style="right:262.5px;top:787.85px;font-size:12px;line-height:14px;color:#000">273</div>
<div class="t" style="right:176.5px;top:787.85px;font-size:12px;line-height:14px;color:#000">273</div>
<div class="t" style="right:85px;top:787.85px;font-size:12px;line-height:14px;color:#000">1.00</div>
<div class="t" style="right:10px;top:787.85px;font-size:12px;line-height:14px;color:#000">0.10</div>
<div class="a" style="left:5px;top:821px;width:859px;height:2px;background:#dde7f2"></div>
<div class="a" style="left:0;top:821px;width:5px;height:2px;background:#104a86"></div>
</body></html>
